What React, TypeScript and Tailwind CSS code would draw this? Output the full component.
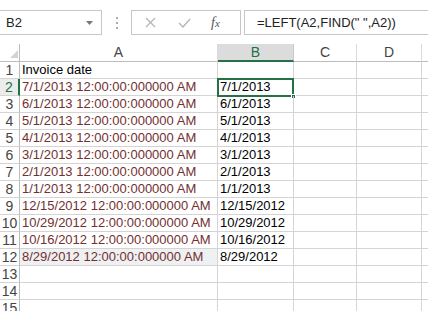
import React from "react";

const rowsA = [
  "Invoice date",
  "7/1/2013 12:00:00:000000 AM",
  "6/1/2013 12:00:00:000000 AM",
  "5/1/2013 12:00:00:000000 AM",
  "4/1/2013 12:00:00:000000 AM",
  "3/1/2013 12:00:00:000000 AM",
  "2/1/2013 12:00:00:000000 AM",
  "1/1/2013 12:00:00:000000 AM",
  "12/15/2012 12:00:00:000000 AM",
  "10/29/2012 12:00:00:000000 AM",
  "10/16/2012 12:00:00:000000 AM",
  "8/29/2012 12:00:00:000000 AM",
  "",
  "",
  "",
];

const rowsB = [
  "",
  "7/1/2013",
  "6/1/2013",
  "5/1/2013",
  "4/1/2013",
  "3/1/2013",
  "2/1/2013",
  "1/1/2013",
  "12/15/2012",
  "10/29/2012",
  "10/16/2012",
  "8/29/2012",
  "",
  "",
  "",
];

function Toolbar() {
  return (
    <div className="h-[44px] flex items-start pt-[10px] text-[13px] text-[#222]">
      {/* name box */}
      <div className="w-[102px] h-[25px] border border-l-0 border-[#c6c6c6] flex items-center justify-between pl-[6px] pr-[8px]">
        <span>B2</span>
        <svg width="7" height="4" viewBox="0 0 7 4">
          <polygon points="0,0 7,0 3.5,4" fill="#777" />
        </svg>
      </div>
      <div className="w-[29px] h-[25px] flex flex-col items-center justify-center gap-[3px]">
        <span className="w-[2px] h-[2px] bg-[#aaa]" />
        <span className="w-[2px] h-[2px] bg-[#aaa]" />
        <span className="w-[2px] h-[2px] bg-[#aaa]" />
      </div>
      {/* cancel / enter / fx */}
      <div className="w-[110px] h-[25px] border border-[#c6c6c6] flex items-center">
        <svg className="ml-[13px]" width="11" height="11" viewBox="0 0 11 11">
          <path d="M1 1 L10 10 M10 1 L1 10" stroke="#b5b5b5" strokeWidth="1.3" fill="none" />
        </svg>
        <svg className="ml-[22px]" width="13" height="10" viewBox="0 0 13 10">
          <path d="M1 5 L5 9 L12 1" stroke="#b5b5b5" strokeWidth="1.4" fill="none" />
        </svg>
        <span className="ml-[20px] font-['Liberation_Serif',serif] italic text-[14px] text-[#555] leading-none">
          f<span className="text-[11px]">x</span>
        </span>
      </div>
      <div className="ml-[3px] flex-1 h-[25px] border border-r-0 border-[#c6c6c6] flex items-center pl-[12px]">
        =LEFT(A2,FIND(" ",A2))
      </div>
    </div>
  );
}

export default function App() {
  return (
    <div className="w-[428px] h-[311px] overflow-hidden bg-white font-['Liberation_Sans',Arial,sans-serif]">
      <Toolbar />
      <div className="grid grid-cols-[20px_198px_76px_63px_65px_1fr]">
        {/* column headers */}
        <div className="h-[18px] border-r border-b border-[#bcbcbc] flex items-end justify-end pr-[1px] pb-[3px]">
          <svg width="8" height="8" viewBox="0 0 8 8">
            <polygon points="8,0 8,8 0,8" fill="#d2d2d2" />
          </svg>
        </div>
        <div className="h-[18px] border-r border-[#dadada] border-b border-b-[#bcbcbc] flex items-center justify-center text-[14px] text-[#444]">
          A
        </div>
        <div className="h-[18px] bg-[#dcdcdc] border-r border-[#c8c8c8] border-b-2 border-b-[#217346] flex items-center justify-center text-[14px] text-[#217346]">
          B
        </div>
        <div className="h-[18px] border-r border-[#dadada] border-b border-b-[#bcbcbc] flex items-center justify-center text-[14px] text-[#444]">
          C
        </div>
        <div className="h-[18px] border-r border-[#dadada] border-b border-b-[#bcbcbc] flex items-center justify-center text-[14px] text-[#444]">
          D
        </div>
        <div className="h-[18px] border-b border-[#bcbcbc]" />

        {rowsA.map((a, i) => {
          const n = i + 1;
          const active = n === 2;
          return (
            <React.Fragment key={n}>
              <div
                className={
                  active
                    ? "h-[17px] border-r-2 border-r-[#217346] border-b border-b-[#d4d4d4] bg-[#ececec] flex items-center justify-center text-[14px] text-[#217346]"
                    : "h-[17px] border-r border-r-[#bcbcbc] border-b border-b-[#d4d4d4] flex items-center justify-center text-[14px] text-[#444]"
                }
              >
                {n}
              </div>
              <div
                className={
                  (n === 12 ? "bg-[#eef0f2] " : "") +
                  "h-[17px] border-r border-b border-[#d4d4d4] flex items-center pl-[2px] text-[13px] whitespace-nowrap " +
                  (n === 1 ? "text-black" : "text-[#723030]")
                }
              >
                {a}
              </div>
              <div className="relative h-[17px] border-r border-b border-[#d4d4d4] flex items-center pl-[2px] text-[13px] text-black">
                {rowsB[i]}
                {active && (
                  <div className="absolute -left-[1px] -top-[1px] w-[77px] h-[19px] border-2 border-[#217346]">
                    <div className="absolute -right-[4px] -bottom-[4px] w-[5px] h-[5px] bg-[#217346] border border-white" />
                  </div>
                )}
              </div>
              <div className="h-[17px] border-r border-b border-[#d4d4d4]" />
              <div className="h-[17px] border-r border-b border-[#d4d4d4]" />
              <div className="h-[17px] border-b border-[#d4d4d4]" />
            </React.Fragment>
          );
        })}
      </div>
    </div>
  );
}
